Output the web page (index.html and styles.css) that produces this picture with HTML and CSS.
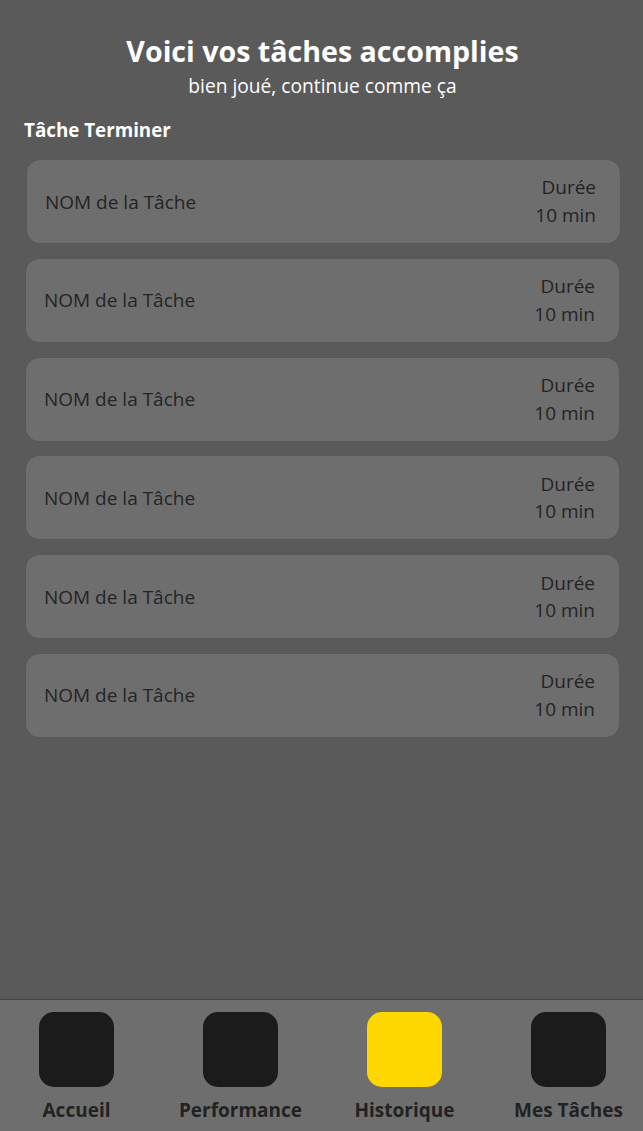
FILE: index.html
```html
<!DOCTYPE html>
<html lang="fr">
<head>
<meta charset="utf-8">
<title>Historique</title>
<link rel="stylesheet" href="styles.css">
</head>
<body>
<div class="app">
  <main class="content">
    <header class="header">
      <h1 class="title">Voici vos tâches accomplies</h1>
      <p class="subtitle">bien joué, continue comme ça</p>
    </header>
    <h2 class="section-title">Tâche Terminer</h2>
    <ul class="task-list">
      <li class="task-card first">
        <span class="task-name">NOM de la Tâche</span>
        <span class="task-duration">Durée<br>10 min</span>
      </li>
      <li class="task-card">
        <span class="task-name">NOM de la Tâche</span>
        <span class="task-duration">Durée<br>10 min</span>
      </li>
      <li class="task-card">
        <span class="task-name">NOM de la Tâche</span>
        <span class="task-duration">Durée<br>10 min</span>
      </li>
      <li class="task-card">
        <span class="task-name">NOM de la Tâche</span>
        <span class="task-duration">Durée<br>10 min</span>
      </li>
      <li class="task-card">
        <span class="task-name">NOM de la Tâche</span>
        <span class="task-duration">Durée<br>10 min</span>
      </li>
      <li class="task-card">
        <span class="task-name">NOM de la Tâche</span>
        <span class="task-duration">Durée<br>10 min</span>
      </li>
    </ul>
  </main>
  <nav class="tabbar">
    <a class="tab"><span class="tab-icon"></span><span class="tab-label">Accueil</span></a>
    <a class="tab"><span class="tab-icon"></span><span class="tab-label">Performance</span></a>
    <a class="tab active"><span class="tab-icon"></span><span class="tab-label">Historique</span></a>
    <a class="tab"><span class="tab-icon"></span><span class="tab-label">Mes Tâches</span></a>
  </nav>
</div>
</body>
</html>
```

FILE: styles.css
```css
* { box-sizing: border-box; }

html, body {
  margin: 0;
  padding: 0;
  height: 100%;
}

body {
  background: #5a5a5a;
  font-family: "Open Sans", "Noto Sans", sans-serif;
}

.app {
  height: 1131px;
  display: flex;
  flex-direction: column;
}

.content {
  flex: 1;
  padding: 0 24px 0 26px;
}

.header {
  text-align: center;
  padding-top: 32px;
  color: #fff;
}

.title {
  margin: 0;
  font-size: 28.6px;
  font-weight: 700;
  line-height: 38px;
}

.subtitle {
  margin: 3px 0 0;
  font-size: 19.2px;
  line-height: 26px;
}

.section-title {
  margin: 18px 0 0 -2px;
  color: #fff;
  font-size: 18.8px;
  font-weight: 700;
  line-height: 26px;
}

.task-list {
  list-style: none;
  margin: 17px 0 0;
  padding: 0;
  display: flex;
  flex-direction: column;
  gap: 15.8px;
}

.task-card {
  height: 83px;
  background: #6e6e6e;
  border-radius: 13px;
  box-shadow: 0 0 1px rgba(0, 0, 0, 0.2);
  display: flex;
  align-items: center;
  justify-content: space-between;
  padding: 0 24px 0 18px;
  color: #242424;
}

.task-card.first {
  margin-left: 1px;
  margin-right: -1px;
}

.task-name {
  font-size: 19px;
  line-height: 26px;
}

.task-duration {
  font-size: 19px;
  line-height: 27.6px;
  text-align: right;
  padding-top: 1px;
}

.tabbar {
  height: 131px;
  background: #6e6e6e;
  box-shadow: 0 -1px 1px rgba(0, 0, 0, 0.2);
  display: flex;
  gap: 44px;
  padding: 12px 0 0 16.5px;
}

.tab {
  width: 120px;
  display: flex;
  flex-direction: column;
  align-items: center;
}

.tab-icon {
  width: 75px;
  height: 75px;
  border-radius: 15px;
  background: #1b1b1b;
}

.tab.active .tab-icon {
  background: #ffd700;
}

.tab-label {
  margin-top: 12px;
  white-space: nowrap;
  font-size: 19px;
  font-weight: 700;
  line-height: 23px;
  color: #222;
}
```
